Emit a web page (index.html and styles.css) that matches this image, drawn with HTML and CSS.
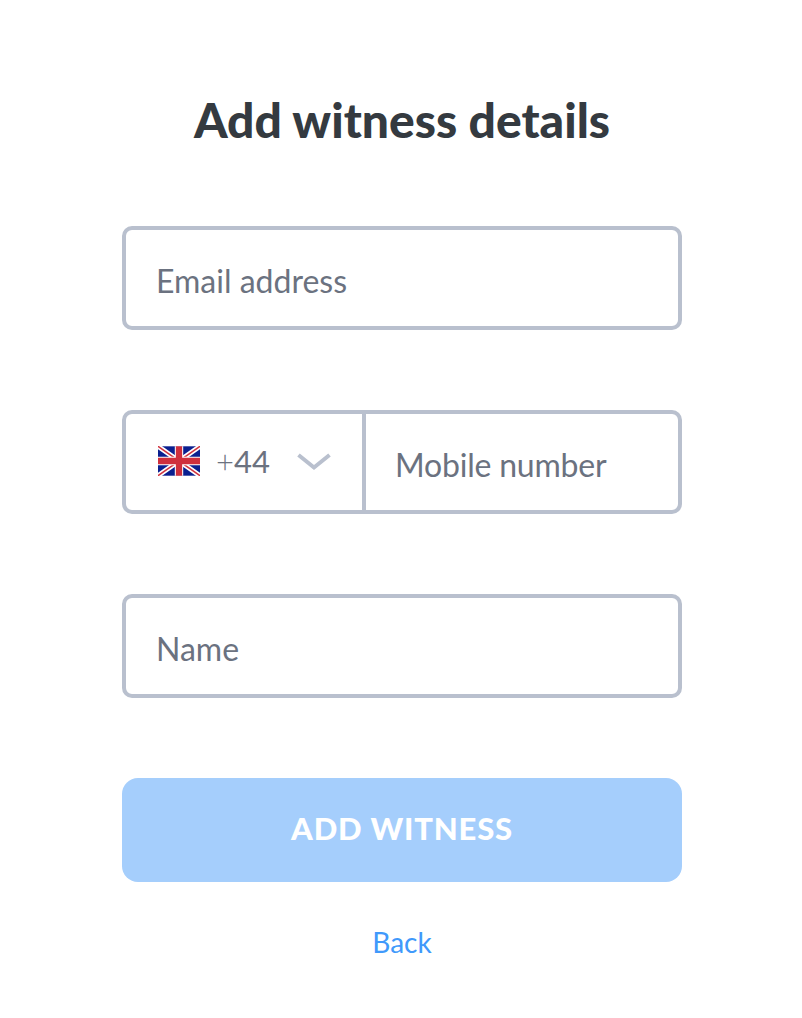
FILE: index.html
```html
<!DOCTYPE html>
<html lang="en">
<head>
<meta charset="utf-8">
<title>Add witness details</title>
<link rel="stylesheet" href="styles.css">
</head>
<body>
<main class="page">
  <h1 class="title">Add witness details</h1>
  <form class="form">
    <div class="field"><span class="placeholder">Email address</span></div>
    <div class="field phone">
      <div class="country">
        <svg class="flag" viewBox="0 0 60 42" aria-hidden="true">
          <rect width="60" height="42" fill="#0a1f8f"/>
          <path d="M0 0L60 42M60 0L0 42" stroke="#fff" stroke-width="7"/>
          <path d="M0 0L60 42M60 0L0 42" stroke="#d1343f" stroke-width="2.2"/>
          <path d="M30 0V42M0 21H60" stroke="#fff" stroke-width="12"/>
          <path d="M30 0V42M0 21H60" stroke="#cf2f3c" stroke-width="9"/>
        </svg>
        <span class="code"><span class="plus">+</span>44</span>
        <svg class="chevron" viewBox="0 0 34 18" aria-hidden="true">
          <path d="M1.5 2L17 14.5L32.5 2" fill="none" stroke="#b9c0ce" stroke-width="4"/>
        </svg>
      </div>
      <span class="placeholder mobile">Mobile number</span>
    </div>
    <div class="field"><span class="placeholder">Name</span></div>
    <button class="submit" type="button">ADD WITNESS</button>
    <a class="back" href="#">Back</a>
  </form>
</main>
</body>
</html>
```
FILE: styles.css
```css
* { box-sizing: border-box; }
html, body { margin: 0; background: #fff; }
body { font-family: Lato, "Open Sans", sans-serif; }
.page { width: 560px; margin: 0 0 0 122px; padding-top: 90px; }
.title {
  margin: 0 0 76px;
  height: 60px;
  line-height: 60px;
  text-align: center;
  font-size: 48px;
  font-weight: 900;
  color: #343a40;
  white-space: nowrap;
}
.form { display: flex; flex-direction: column; }
.field {
  display: flex;
  align-items: center;
  height: 104px;
  margin-bottom: 80px;
  padding-left: 30px;
  border: 4px solid #b9c0ce;
  border-radius: 10px;
  background: #fff;
}
.placeholder { margin-top: 6px; font-size: 32px; color: #6b7280; line-height: 40px; }
.phone { padding-left: 0; }
.country {
  display: flex;
  align-items: center;
  width: 240px;
  height: 100%;
  padding-left: 32px;
  border-right: 4px solid #b9c0ce;
}
.flag { width: 42px; height: 30px; margin-top: -2px; flex: none; }
.code { margin: -2px 0 0 16px; font-size: 31px; color: #6b7280; line-height: 40px; }
.plus { font-weight: 300; }
.chevron { width: 34px; height: 18px; margin-left: 27px; flex: none; }
.mobile { margin-left: 29px; letter-spacing: -0.2px; }
.submit {
  height: 104px;
  padding: 0 0 4px;
  border: 0;
  border-radius: 16px;
  background: #a5cefc;
  color: #fff;
  font: 900 31px Lato, sans-serif;
  letter-spacing: 0.8px;
}
.back {
  align-self: center;
  margin-top: 42px;
  font-size: 28px;
  line-height: 36px;
  color: #4099fb;
  text-decoration: none;
}
```
